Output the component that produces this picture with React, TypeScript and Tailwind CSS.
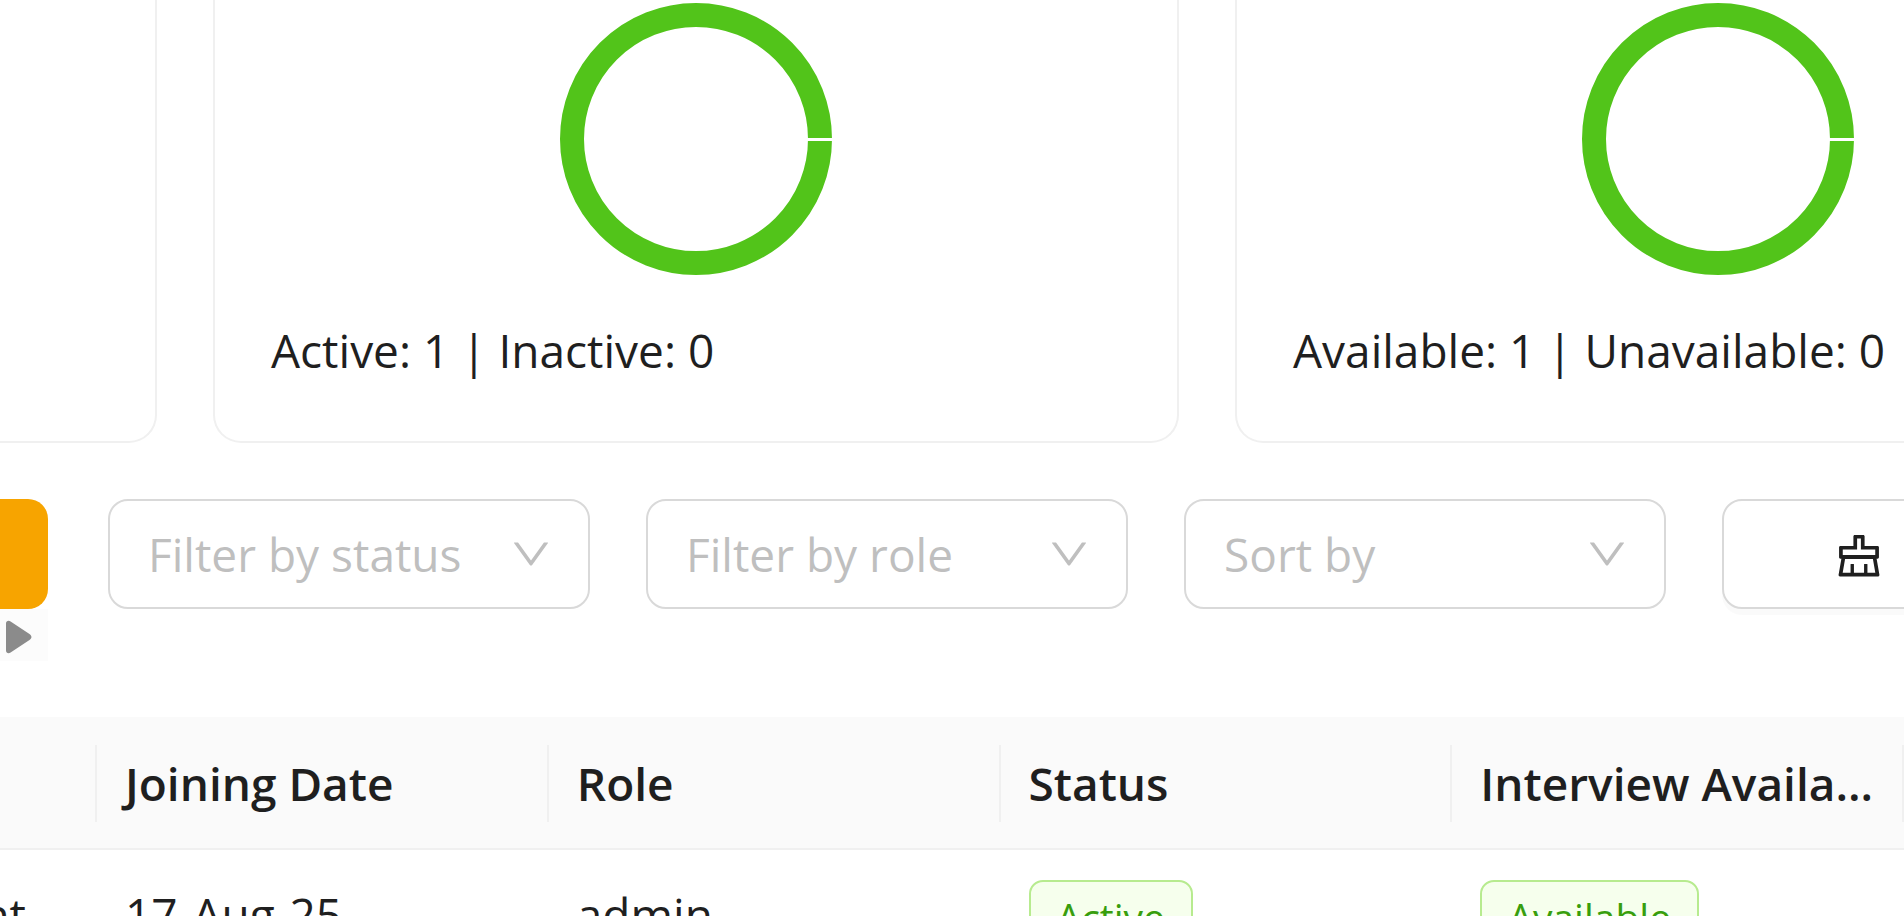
import { AiOutlineClear, AiOutlineDown } from "react-icons/ai";

function Donut({ label }: { label: string }) {
  return (
    <svg role="img" aria-label={label} viewBox="0 0 280 280" className="mx-auto block size-[280px]">
      <circle cx="140" cy="139" r="124" fill="none" stroke="#52c41a" strokeWidth="24" />
      <rect x="250" y="138" width="30" height="3" fill="#fff" />
    </svg>
  );
}

function StatCard({ label, text }: { label: string; text: string }) {
  return (
    <section className="w-[966px] shrink-0 rounded-b-[28px] border-2 border-t-0 border-[#f0f0f0] px-14 pb-[52px]">
      <Donut label={label} />
      <p className="mt-8 whitespace-nowrap leading-[77px]">{text}</p>
    </section>
  );
}

function FilterSelect({ label, options }: { label: string; options: string[] }) {
  return (
    <div className="relative w-[482px] shrink-0">
      <select
        aria-label={label}
        defaultValue=""
        className="h-[110px] w-full appearance-none rounded-[20px] border-2 border-[#d9d9d9] bg-white px-[38px] text-[#bfbfbf]"
      >
        <option value="" disabled>
          {label}
        </option>
        {options.map((option) => (
          <option key={option}>{option}</option>
        ))}
      </select>
      <AiOutlineDown className="pointer-events-none absolute inset-y-0 right-9 my-auto size-[46px] text-[#bfbfbf]" />
    </div>
  );
}

function Tag({ children }: { children: string }) {
  return (
    <span className="inline-block rounded-[14px] border-2 border-[#b7eb8f] bg-[#f6ffed] px-[26px] text-[39px] leading-[69px] text-[#389e0d]">
      {children}
    </span>
  );
}

const columns = ["Joining Date", "Role", "Status", "Interview Availability"];

export default function App() {
  return (
    <main className="h-screen overflow-hidden bg-white font-['Open_Sans',sans-serif] text-[46px] text-[#1f1f1f]">
      <div className="flex gap-14">
        <section className="w-[157px] shrink-0 rounded-br-[28px] border-r-2 border-b-2 border-[#f0f0f0]" />
        <StatCard label="Active members" text="Active: 1 | Inactive: 0" />
        <StatCard label="Available members" text="Available: 1 | Unavailable: 0" />
      </div>

      <div className="mt-14 flex items-start gap-14">
        <div className="mr-1 w-12 shrink-0 bg-[#fcfcfc]">
          <div className="bg-white">
            <button aria-label="Search" className="block h-[110px] w-full rounded-r-[20px] bg-[#f7a400]" />
          </div>
          <button aria-label="Scroll right" className="flex h-[52px] w-full items-center pt-1 pl-1.5">
            <svg viewBox="0 0 26 34" className="h-[34px] w-[26px]" fill="#8b8b8b">
              <path d="M0 3.500C0 .8 2.600 0 4.600 1.400L23.500 14c2.600 2 2.600 4 0 6L4.600 32.600C2.600 34 0 33.200 0 30.500Z" />
            </svg>
          </button>
        </div>
        <FilterSelect label="Filter by status" options={["Active", "Inactive"]} />
        <FilterSelect label="Filter by role" options={["admin"]} />
        <FilterSelect label="Sort by" options={["Joining Date", "Role"]} />
        <button
          aria-label="Clear filters"
          className="flex h-[110px] w-[482px] shrink-0 items-center rounded-[20px] border-2 border-[#d9d9d9] bg-white pt-1 pl-[108px] shadow-[0_6px_0_rgba(0,0,0,0.02)]"
        >
          <AiOutlineClear className="size-[54px]" />
        </button>
      </div>

      <table className="mt-14 w-full table-fixed text-left leading-[77px]">
        <thead className="bg-[#fafafa]">
          <tr className="border-b-2 border-[#f0f0f0]">
            <th aria-label="Email" className="w-[97px] pt-7 pb-[26px]">
              <div className="h-[77px] border-r-2 border-[#f0f0f0]" />
            </th>
            {columns.map((column) => (
              <th key={column} className="pt-7 pb-[26px] font-semibold">
                <div className="truncate border-r-2 border-[#f0f0f0] px-7">{column}</div>
              </th>
            ))}
          </tr>
        </thead>
        <tbody>
          <tr className="align-top">
            <td className="py-[26px]">
              <div className="flex w-[26px] justify-end overflow-hidden">nt</div>
            </td>
            <td className="px-7 py-[26px]">17-Aug-25</td>
            <td className="px-7 py-[26px]">admin</td>
            <td className="px-7 py-[26px]">
              <Tag>Active</Tag>
            </td>
            <td className="px-7 py-[26px]">
              <Tag>Available</Tag>
            </td>
          </tr>
        </tbody>
      </table>
    </main>
  );
}
